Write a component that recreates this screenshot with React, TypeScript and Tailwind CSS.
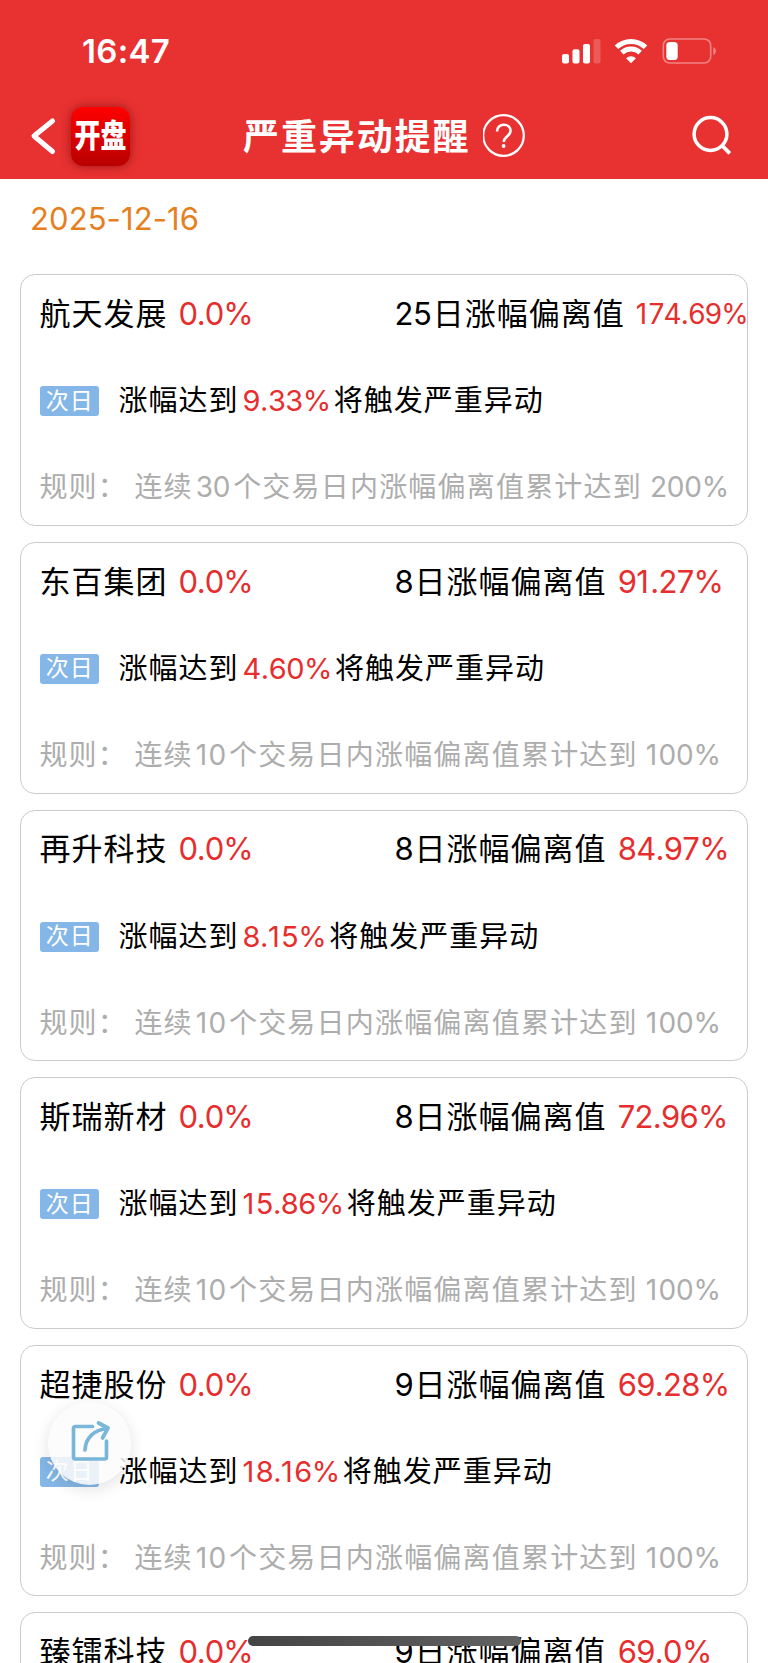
interface Stock {
  name: string;
  change: string;
  days: number;
  deviation: string;
  trigger: string;
  ruleDays: number;
  ruleLimit: string;
}

const stocks: Stock[] = [
  { name: '航天发展', change: '0.0%', days: 25, deviation: '174.69%', trigger: '9.33%', ruleDays: 30, ruleLimit: '200%' },
  { name: '东百集团', change: '0.0%', days: 8, deviation: '91.27%', trigger: '4.60%', ruleDays: 10, ruleLimit: '100%' },
  { name: '再升科技', change: '0.0%', days: 8, deviation: '84.97%', trigger: '8.15%', ruleDays: 10, ruleLimit: '100%' },
  { name: '斯瑞新材', change: '0.0%', days: 8, deviation: '72.96%', trigger: '15.86%', ruleDays: 10, ruleLimit: '100%' },
  { name: '超捷股份', change: '0.0%', days: 9, deviation: '69.28%', trigger: '18.16%', ruleDays: 10, ruleLimit: '100%' },
  { name: '臻镭科技', change: '0.0%', days: 9, deviation: '69.0%', trigger: '18.35%', ruleDays: 10, ruleLimit: '100%' },
];

function StatusBar() {
  return (
    <div className="flex h-[102px] items-center justify-between pl-[82px] pr-[50px]">
      <span className="text-[33px] font-semibold leading-none tracking-[0.3px]">16:47</span>
      <svg width="156" height="28" viewBox="0 0 156 28" fill="none">
        <g fill="#fff">
          <rect x="0" y="17" width="7" height="9.5" rx="2" />
          <rect x="10.5" y="12.3" width="7" height="14.2" rx="2" />
          <rect x="21" y="7" width="7" height="19.5" rx="2" />
          <rect x="31.5" y="2" width="7" height="24.5" rx="2" opacity="0.2" />
        </g>
        <g stroke="#fff" strokeWidth="5">
          <path d="M54.5 10.2a21 21 0 0 1 29 0" />
          <path d="M59.8 15.7a13.5 13.5 0 0 1 18.4 0" />
        </g>
        <path d="M69 26.2l-4.9-5a7 7 0 0 1 9.8 0z" fill="#fff" />
        <rect x="101.3" y="2" width="47.4" height="24" rx="6.5" stroke="#fff" strokeOpacity="0.4" strokeWidth="1.6" />
        <rect x="104.3" y="5" width="11.4" height="18" rx="3.5" fill="#fff" />
        <path d="M151.3 10v8c1.6-.7 2.6-2.2 2.6-4s-1-3.3-2.6-4z" fill="#fff" opacity="0.4" />
      </svg>
    </div>
  );
}

function NavBar() {
  return (
    <div className="flex h-[77px] items-start">
      <div className="flex w-[243px] shrink-0 items-center pl-[30px] pt-[4.5px]">
        <svg width="28" height="59" viewBox="0 0 28 59" fill="none">
          <path d="M22.5 14 4 29 22.5 44.5" stroke="#fff" strokeWidth="5" strokeLinecap="round" strokeLinejoin="round" />
        </svg>
        <div className="ml-[13px] flex size-[59px] items-center justify-center rounded-[12px] bg-linear-to-b from-[#ff0000] to-[#b80000] shadow-[0_0_10px_rgba(90,0,0,0.55)]">
          <span className="scale-y-[1.24] text-[26px] font-black leading-none">开盘</span>
        </div>
      </div>
      <h1 className="mt-[13px] w-[240px] whitespace-nowrap text-[36px] font-bold leading-[44px] tracking-[1.9px]">严重异动提醒</h1>
      <svg className="mt-[12px]" width="44" height="44" viewBox="0 0 44 44" fill="none" stroke="#fff">
        <circle cx="20.5" cy="21.5" r="20.3" strokeWidth="2.2" />
        <path d="M14 17.5c0-4 2.8-6.8 6.8-6.8s6.7 2.6 6.7 6c0 3-1.7 4.3-3.7 6-2.2 1.8-3 2.8-3 5.3" strokeWidth="2.6" />
        <circle cx="20.6" cy="32" r="1.9" fill="#fff" stroke="none" />
      </svg>
      <svg className="ml-auto mr-[34px] mt-[12px]" width="44" height="44" viewBox="0 0 44 44" fill="none" stroke="#fff">
        <circle cx="20.5" cy="20" r="16.4" strokeWidth="3.5" />
        <path d="M31.5 31 39.8 39.3" strokeWidth="3.8" />
      </svg>
    </div>
  );
}

// the "1" is narrow in Inter, give it some room
function Num({ value, className }: { value: string | number; className: string }) {
  return (
    <span className={className}>
      {String(value)
        .split(/(1)/)
        .filter(Boolean)
        .map((part, i) =>
          part === '1' ? (
            <span key={i} className="tracking-[1.4px]">
              1
            </span>
          ) : (
            part
          )
        )}
    </span>
  );
}

function StockCard({ stock }: { stock: Stock }) {
  const longValue = stock.deviation.length > 6;

  return (
    <div className="h-[251.67px] shrink-0 whitespace-nowrap rounded-[15px] border border-[#cbcbcb] pl-[18.4px] [font-kerning:none]">
      <div className="mt-[17px] flex h-[44px] items-center text-[31px] tracking-[1px]">
        <span className="w-[139px] shrink-0">{stock.name}</span>
        <span className="w-[216px] shrink-0 tracking-[-1.1px] text-[#e62e2e]">{stock.change}</span>
        <span>
          <span className="mr-[1.2px] tracking-[-0.3px]">{stock.days}</span>日涨幅偏离值
        </span>
        <Num
          value={stock.deviation}
          className={longValue ? 'ml-[11px] text-[28px] tracking-[-0.8px] text-[#e62e2e]' : 'ml-[11.3px] tracking-[-0.7px] text-[#e62e2e]'}
        />
      </div>
      <div className="mt-[43px] flex h-[44px] items-center text-[29px] tracking-[1px]">
        <span className="ml-[0.4px] mr-[19.6px] flex h-[30px] w-[59px] items-center justify-center rounded-[3px] bg-[#84b7e7] pl-px text-[23px] leading-none text-white">
          次日
        </span>
        <span>涨幅达到</span>
        <Num value={stock.trigger} className="ml-[4.2px] mr-[3px] tracking-[-0.5px] text-[#e62e2e]" />
        <span>将触发严重异动</span>
      </div>
      <div className="mt-[42px] flex h-[44px] items-center text-[28px] tracking-[1.2px] text-[#adadad]">
        <span className="w-[95px] shrink-0">规则：</span>
        <span>连续</span>
        <Num value={stock.ruleDays} className="ml-[3px] mr-[3px] tracking-[-0.3px]" />
        <span>个交易日内涨幅偏离值累计达到</span>
        <Num value={stock.ruleLimit} className="ml-[8px] tracking-[-0.2px]" />
      </div>
    </div>
  );
}

function ShareButton() {
  return (
    <button className="absolute left-[48px] top-[1402px] flex size-[83px] items-center justify-center rounded-full bg-[#fcfcfc]/85 shadow-[0_4px_16px_rgba(0,0,0,0.12)]">
      <svg className="-mt-[3px] ml-[2px]" width="42" height="44" viewBox="0 0 42 44" fill="none" stroke="#79b7d9" strokeWidth="3.7" strokeLinecap="round" strokeLinejoin="round">
        <path d="M22.5 6.5H5.5a2 2 0 0 0-2 2V37a2 2 0 0 0 2 2h29a2 2 0 0 0 2-2V21" />
        <path d="M15 30C15.5 18 24 9.5 37.5 8.5" />
        <path d="M28.5 3 38 8 32.5 18" />
      </svg>
    </button>
  );
}

export default function App() {
  return (
    <div className="relative h-[1663px] w-[768px] overflow-hidden bg-white font-['Inter','Noto_Sans_CJK_SC',sans-serif] text-black">
      <header className="h-[179px] bg-[#e83131] text-white">
        <StatusBar />
        <NavBar />
      </header>
      <div className="flex h-[95.2px] items-start pl-[30px] pt-[18px] text-[31px] leading-[44px] tracking-[0.1px] text-[#e6801f]">2025-12-16</div>
      <main className="flex flex-col gap-4 px-5">
        {stocks.map((stock) => (
          <StockCard key={stock.name} stock={stock} />
        ))}
      </main>
      <ShareButton />
      <div className="absolute left-[248px] top-[1636px] h-[10px] w-[273px] rounded-full bg-linear-to-r from-[#444444] to-[#626262]" />
    </div>
  );
}
